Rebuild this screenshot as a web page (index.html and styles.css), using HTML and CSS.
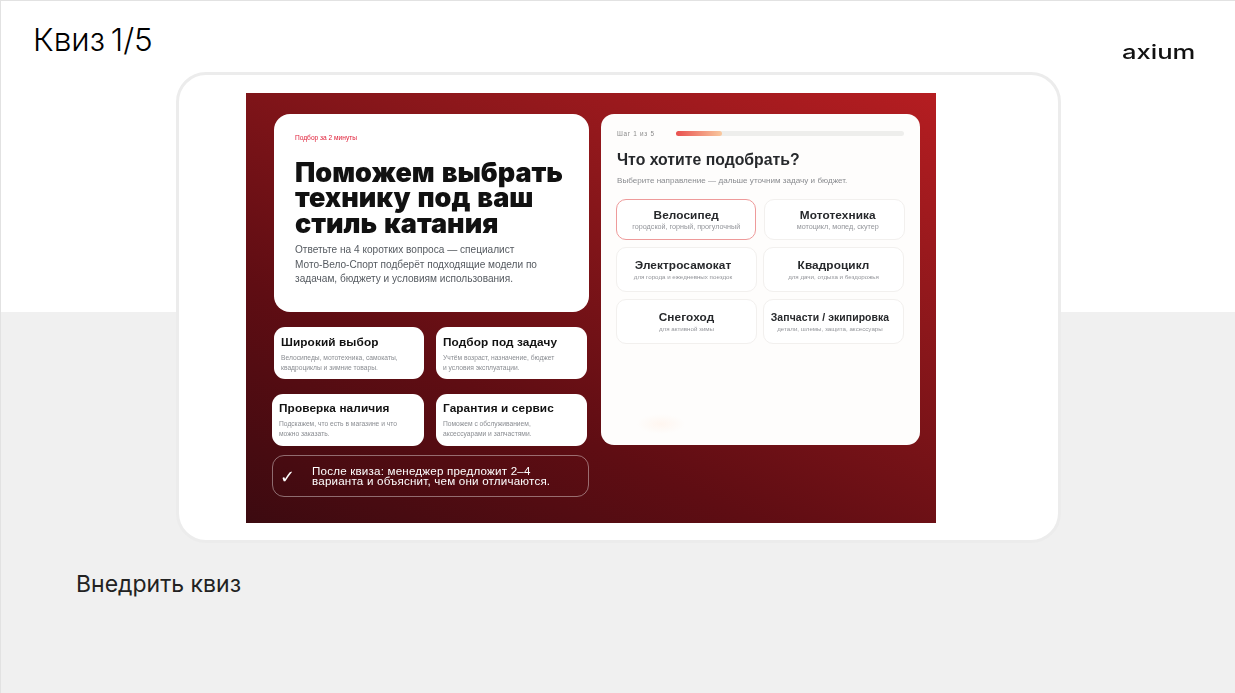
FILE: index.html
```html
<!DOCTYPE html>
<html lang="ru">
<head>
    <meta charset="UTF-8">
    <meta name="viewport" content="width=device-width, initial-scale=1.0">
    <title>Квиз 1/5</title>
    <link rel="stylesheet" href="styles.css">
</head>
<body>
    <div class="slide">
        <header class="slide-head">
            <h1 class="slide-title">Квиз 1/5</h1>
            <div class="logo">axium</div>
        </header>

        <div class="frame">
            <div class="shot">
                <div class="left-col">
                    <div class="hero">
                        <div class="tag">Подбор за 2 минуты</div>
                        <h2>Поможем выбрать<br>технику под ваш<br>стиль катания</h2>
                        <p>Ответьте на 4 коротких вопроса — специалист<br>Мото-Вело-Спорт подберёт подходящие модели по<br>задачам, бюджету и условиям использования.</p>
                    </div>

                    <div class="benefit-row row-first">
                        <div class="benefit benefit-a">
                            <h3>Широкий выбор</h3>
                            <p>Велосипеды, мототехника, самокаты, квадроциклы и зимние товары.</p>
                        </div>
                        <div class="benefit benefit-b">
                            <h3>Подбор под задачу</h3>
                            <p>Учтём возраст, назначение, бюджет<br>и условия эксплуатации.</p>
                        </div>
                    </div>
                    <div class="benefit-row">
                        <div class="benefit benefit-c">
                            <h3>Проверка наличия</h3>
                            <p>Подскажем, что есть в магазине и что<br>можно заказать.</p>
                        </div>
                        <div class="benefit benefit-b">
                            <h3>Гарантия и сервис</h3>
                            <p>Поможем с обслуживанием,<br>аксессуарами и запчастями.</p>
                        </div>
                    </div>

                    <div class="note">
                        <span class="note-check">✓</span>
                        <span class="note-text">После квиза: менеджер предложит 2–4<br>варианта и объяснит, чем они отличаются.</span>
                    </div>
                </div>

                <div class="panel">
                    <div class="step-row">
                        <span class="step-label">Шаг 1 из 5</span>
                        <div class="progress"><div class="progress-fill"></div></div>
                    </div>
                    <h2>Что хотите подобрать?</h2>
                    <p class="panel-sub">Выберите направление — дальше уточним задачу и бюджет.</p>

                    <div class="options">
                        <div class="option-row row-short">
                            <div class="option option-active">
                                <strong>Велосипед</strong>
                                <span>городской, горный, прогулочный</span>
                            </div>
                            <div class="option nudge-right">
                                <strong>Мототехника</strong>
                                <span>мотоцикл, мопед, скутер</span>
                            </div>
                        </div>
                        <div class="option-row">
                            <div class="option nudge-left">
                                <strong>Электросамокат</strong>
                                <span>для города и ежедневных поездок</span>
                            </div>
                            <div class="option">
                                <strong>Квадроцикл</strong>
                                <span>для дачи, отдыха и бездорожья</span>
                            </div>
                        </div>
                        <div class="option-row">
                            <div class="option">
                                <strong>Снегоход</strong>
                                <span>для активной зимы</span>
                            </div>
                            <div class="option nudge-left option-small">
                                <strong>Запчасти / экипировка</strong>
                                <span>детали, шлемы, защита, аксессуары</span>
                            </div>
                        </div>
                    </div>
                </div>
            </div>
        </div>

        <div class="slide-foot">Внедрить квиз</div>
    </div>
</body>
</html>
```

FILE: styles.css
```css
* {
    margin: 0;
    padding: 0;
    box-sizing: border-box;
}

body {
    width: 1235px;
    height: 693px;
    overflow: hidden;
    background: #fff;
    font-family: 'Liberation Sans', Arial, sans-serif;
}

.slide {
    height: 693px;
    border-top: 1px solid #e2e2e2;
    border-left: 1px solid #e2e2e2;
    background: linear-gradient(to bottom, #fff 311px, #f0f0f0 311px);
}

.slide-head {
    height: 71px;
    display: flex;
    justify-content: space-between;
    padding: 20px 40px 0 32px;
}

.slide-title {
    font-family: Inter, sans-serif;
    font-size: 31.5px;
    line-height: 38px;
    font-weight: 300;
    word-spacing: -3px;
    color: #000;
}

.logo {
    font-family: Inter, sans-serif;
    font-weight: 500;
    font-size: 20px;
    line-height: 22px;
    margin-top: 20px;
    transform: scaleX(1.28);
    transform-origin: right center;
    color: #111;
}

.frame {
    width: 885px;
    height: 471px;
    margin-left: 175px;
    border: 3px solid #ececec;
    border-radius: 30px;
    background: #fff;
    padding: 18px 0 0 67px;
}

.shot {
    width: 690px;
    height: 430px;
    display: flex;
    padding: 21px 0 0 26px;
    filter: blur(0.4px);
    background: linear-gradient(205deg, #b51d21 0%, #8c171b 32%, #5f0d13 68%, #3c0a10 100%);
}

.left-col {
    width: 317px;
}

.hero {
    width: 315px;
    height: 198px;
    margin-left: 2px;
    padding: 19px 20px 0 21px;
    background: #fff;
    border-radius: 16px;
}

.tag {
    font-size: 6.6px;
    line-height: 10px;
    color: #e0213a;
}

.hero h2 {
    margin-top: 17px;
    font-family: Inter, sans-serif;
    font-size: 27px;
    line-height: 25.4px;
    font-weight: 900;
    word-spacing: 1.5px;
    color: #111;
}

.hero p {
    margin-top: 7px;
    font-size: 10.1px;
    line-height: 14.4px;
    color: #555a60;
}

.benefit-row {
    display: flex;
    margin-top: 15px;
    gap: 12px;
}

.row-first {
    margin-left: 2px;
}

.benefit {
    height: 52px;
    padding: 7px 7px 0;
    background: #fff;
    border-radius: 11px;
}

.row-first .benefit {
    padding-top: 8px;
}

.benefit-a {
    width: 150px;
}

.benefit-b {
    width: 151px;
}

.benefit-c {
    width: 152px;
}

.benefit h3 {
    font-size: 11.8px;
    line-height: 15px;
    font-weight: 700;
    letter-spacing: 0.1px;
    color: #111;
}

.benefit p {
    margin-top: 3px;
    font-size: 6.7px;
    line-height: 9.6px;
    color: #8a8d92;
}

.note {
    height: 42px;
    margin-top: 9px;
    display: flex;
    align-items: center;
    padding: 0 8px 0 7px;
    border: 1px solid rgba(255, 255, 255, 0.4);
    border-radius: 12px;
    color: #fff;
}

.note-check {
    width: 32px;
    flex-shrink: 0;
    font-family: 'DejaVu Sans', sans-serif;
    font-size: 18px;
}

.note-text {
    font-size: 11.6px;
    line-height: 10.5px;
    letter-spacing: 0.2px;
}

.panel {
    width: 319px;
    height: 331px;
    margin-left: 12px;
    padding: 13px 15px 0 16px;
    border-radius: 13px;
    background:
        radial-gradient(ellipse 24px 10px at 60px 310px, #fff6f0, transparent),
        #fefdfc;
}

.panel h2 {
    margin-top: 11px;
    font-size: 15.8px;
    line-height: 20px;
    font-weight: 700;
    color: #26282b;
}

.step-row {
    display: flex;
    align-items: center;
    height: 12px;
}

.step-label {
    width: 59px;
    font-size: 6.4px;
    letter-spacing: 0.7px;
    color: #8a8a8a;
}

.progress {
    width: 228px;
    height: 5px;
    border-radius: 3px;
    background: #eeeeec;
}

.progress-fill {
    width: 46px;
    height: 5px;
    border-radius: 3px;
    background: linear-gradient(to right, #e9504f, #f9c99f);
}

.panel-sub {
    margin-top: 5px;
    font-size: 8.1px;
    line-height: 12px;
    color: #8a8c90;
}

.options {
    margin: 12px 0 0 -1px;
    display: flex;
    flex-direction: column;
    gap: 7px;
}

.option-row {
    display: flex;
    gap: 6px;
    height: 45px;
}

.row-short {
    height: 41px;
    gap: 8px;
}

.option {
    width: 141px;
    display: flex;
    flex-direction: column;
    align-items: center;
    justify-content: center;
    background: #fff;
    border: 1px solid #f2f0ee;
    border-radius: 10px;
}

.option-active {
    border-color: #ee9a9a;
}

.nudge-left {
    padding-right: 7px;
}

.nudge-right {
    padding-left: 6px;
}

.option strong {
    font-size: 11.8px;
    line-height: 13px;
    letter-spacing: 0.1px;
    white-space: nowrap;
    color: #26282b;
}

.option-small strong {
    font-size: 10.4px;
}

.option span {
    margin-top: 1px;
    font-size: 6.2px;
    line-height: 8px;
    white-space: nowrap;
    color: #93959a;
}

.row-short .option span {
    font-size: 7.2px;
}

.slide-foot {
    margin-top: 26px;
    padding-left: 75px;
    font-family: Inter, sans-serif;
    font-size: 23px;
    line-height: 30px;
    color: #222;
}
```
